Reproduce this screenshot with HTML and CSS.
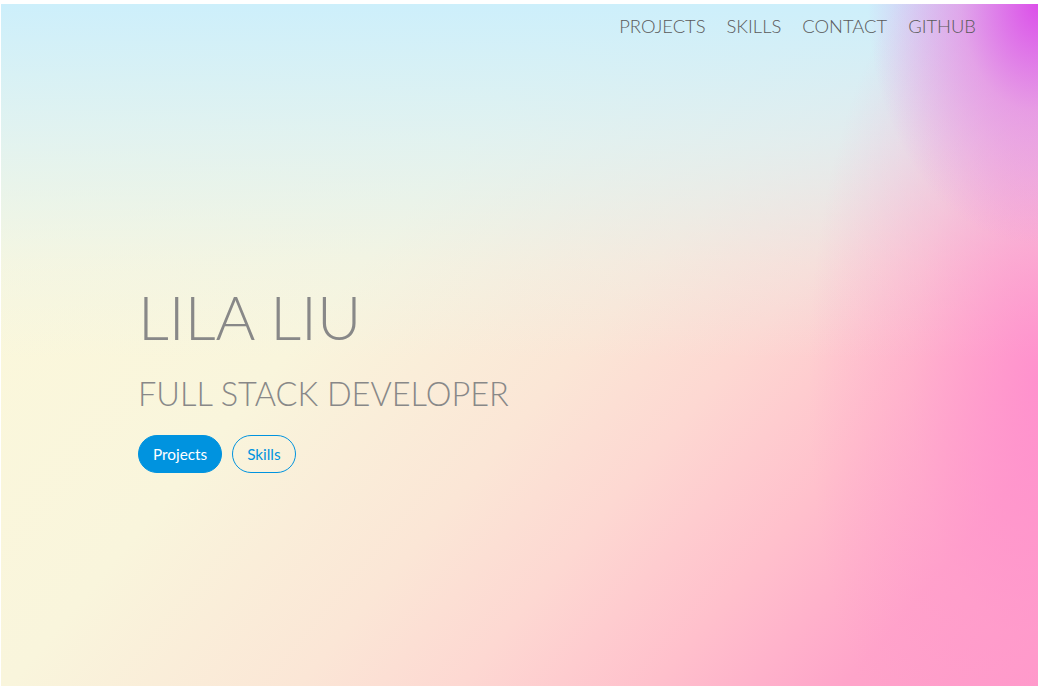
FILE: index.html
```html
<!DOCTYPE html>
<html lang="en">
<head>
<meta charset="utf-8">
<title>Lila Liu</title>
<link rel="stylesheet" href="styles.css">
</head>
<body>
<div class="frame">
  <main class="hero">
    <nav class="nav">
      <a href="#projects">PROJECTS</a>
      <a href="#skills">SKILLS</a>
      <a href="#contact">CONTACT</a>
      <a href="#github">GITHUB</a>
    </nav>
    <section class="intro">
      <h1 class="name">LILA LIU</h1>
      <h2 class="role">FULL STACK DEVELOPER</h2>
      <div class="actions">
        <a class="btn btn-solid" href="#projects">Projects</a>
        <a class="btn btn-outline" href="#skills">Skills</a>
      </div>
    </section>
  </main>
</div>
</body>
</html>
```
FILE: styles.css
```css
* { box-sizing: border-box; }
html, body { margin: 0; padding: 0; background: #fff; }
body { font-family: Lato, "Open Sans", sans-serif; }
.frame {
  width: 1040px;
  height: 690px;
  padding: 4px 2px 4px 1px;
}
.hero {
  height: 100%;
  display: flex;
  flex-direction: column;
  background:
    radial-gradient(ellipse 170px 240px at 100% 0%, rgba(220,80,233,1) 0%, rgba(230,125,228,0.6) 45%, rgba(235,160,230,0) 100%),
    radial-gradient(ellipse 230px 480px at 100% 55%, rgba(255,138,206,0.8) 0%, rgba(255,150,205,0.35) 55%, rgba(255,160,205,0) 100%),
    linear-gradient(to bottom, rgba(205,239,251,1) 0%, rgba(218,241,246,0.75) 20%, rgba(228,242,242,0.3) 38%, rgba(235,242,240,0) 52%),
    linear-gradient(130deg, #fcf9db 0%, #f9f5dc 36%, #fbe6d6 54%, #fdd8d2 64%, #ffc0cc 76%, #ffa4ca 88%, #ff9bca 100%);
}
.nav {
  display: flex;
  justify-content: flex-end;
  gap: 21px;
  padding: 12px 62px 0 0;
}
.nav a {
  color: #5a5a5a;
  text-decoration: none;
  font-weight: 300;
  font-size: 18.4px;
  line-height: 20px;
}
.intro {
  padding: 248px 0 0 137px;
}
.name {
  margin: 0;
  font-weight: 300;
  font-size: 61px;
  line-height: 66px;
  color: #888;
}
.role {
  margin: 24px 0 0;
  font-weight: 300;
  font-size: 32.5px;
  line-height: 40px;
  color: #888;
}
.actions {
  display: flex;
  gap: 10px;
  margin-top: 21px;
}
.btn {
  display: inline-block;
  height: 38px;
  line-height: 36px;
  padding: 0 14px;
  border-radius: 19px;
  font-size: 15.3px;
  font-weight: 400;
  text-decoration: none;
  border: 1px solid #0093df;
}
.btn-solid { background: #0093df; color: #fff; }
.btn-outline { background: transparent; color: #0093df; }
```
